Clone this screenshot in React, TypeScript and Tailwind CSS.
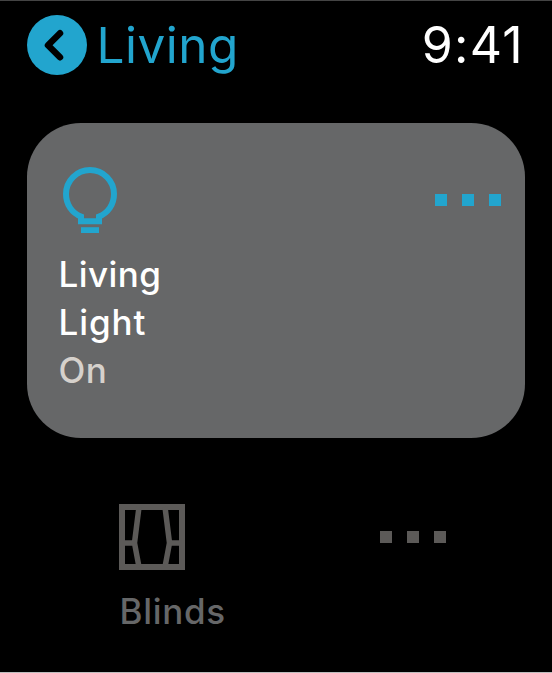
import React from "react";

function Dots({ className }: { className: string }) {
  return (
    <svg viewBox="0 0 66 12" className={`h-[12px] w-[66px] shrink-0 overflow-visible ${className}`} fill="currentColor">
      <rect width="12" height="12" />
      <rect x="27" width="12" height="12" />
      <rect x="54" width="12" height="12" />
    </svg>
  );
}

function BulbIcon() {
  return (
    <svg viewBox="0 0 54 66" className="h-[66px] w-[54px] text-[#22a5ce]" fill="none">
      <path d="M18 49.5V54.2H36V49.5C45 46 51 37.500 51 27A24 24 0 0 0 3 27C3 37.500 9 46 18 49.500Z" stroke="currentColor" strokeWidth="6" />
      <rect x="18" y="60.200" width="18" height="5.800" fill="currentColor" />
    </svg>
  );
}

function BlindsIcon() {
  return (
    <svg viewBox="0 0 66 66" className="h-[66px] w-[66px] overflow-visible" fill="none" stroke="currentColor" strokeWidth="6">
      <rect x="3" y="3" width="60" height="60" />
      <path d="M20 3 15.500 39 20 63M46 3 50.500 39 46 63M3 39H15.500M50.500 39H63" strokeWidth="5.500" />
    </svg>
  );
}

export default function App() {
  return (
    <main className="flex h-[673px] w-[552px] flex-col overflow-hidden border-t border-b border-t-[#444444] border-b-[#bdbdbd] bg-black font-['Inter',sans-serif]">
      <header className="flex h-[122px] shrink-0 items-start justify-between pt-[14px] pr-[28px] pl-[27px]">
        <div className="flex h-[60px] items-center text-[#22a5ce]">
          <svg viewBox="0 0 60 60" className="h-[60px] w-[60px]" fill="none">
            <circle cx="30" cy="30" r="30" fill="currentColor" />
            <path d="M33 18.300 21 30.200 33 42.200" stroke="#000" strokeWidth="6.500" strokeLinecap="round" strokeLinejoin="round" />
          </svg>
          <h1 className="ml-[9.500px] text-[49.500px] leading-[60px] tracking-[0.500px]">Living</h1>
        </div>
        <time className="text-[50px] leading-[60px] tracking-[1.300px] text-white">9:41</time>
      </header>

      <section className="ml-[27px] flex h-[315px] w-[498px] shrink-0 items-start justify-between rounded-[54px] bg-[#666768] pt-[44px] pr-[24px] pl-[31px]">
        <div>
          <div className="pl-[5px]">
            <BulbIcon />
          </div>
          <div className="mt-[17px] pl-[0.500px] text-[35px] leading-[48px] font-medium tracking-[0.450px] text-white">
            <p>Living</p>
            <p className="tracking-[0.900px]">Light</p>
            <p className="text-[#d6d1cc]">On</p>
          </div>
        </div>
        <Dots className="mt-[27px] text-[#22a5ce]" />
      </section>

      <section className="flex items-start justify-between pt-[66px] pr-[106.500px] pl-[118.500px] text-[#5c5a58]">
        <div>
          <BlindsIcon />
          <p className="mt-[17px] pl-[1px] text-[35px] leading-[48px] font-medium tracking-[0.700px] text-[#666768]">Blinds</p>
        </div>
        <Dots className="mt-[27px]" />
      </section>
    </main>
  );
}
